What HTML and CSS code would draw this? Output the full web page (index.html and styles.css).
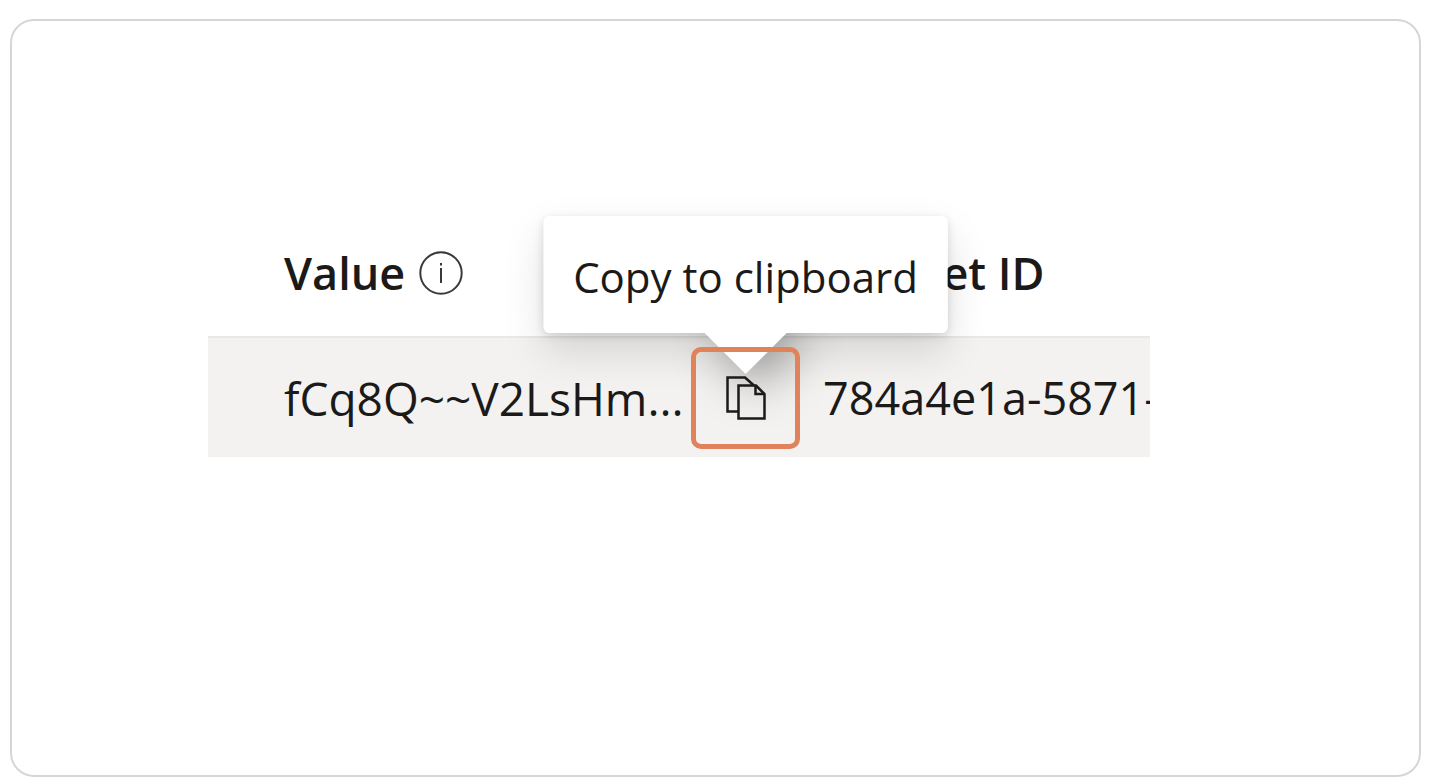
FILE: index.html
```html
<!DOCTYPE html>
<html lang="en">

    <head>
        <meta charset="UTF-8">
        <title>Client secrets</title>
        <link rel="stylesheet" href="styles.css">
    </head>

    <body>
        <main class="card">
            <table class="secrets">
                <colgroup>
                    <col class="col-value">
                    <col class="col-id">
                </colgroup>
                <thead>
                    <tr>
                        <th scope="col">
                            <div class="heading">
                                <span>Value</span>
                                <svg class="info-icon" viewBox="0 0 44 44" aria-hidden="true">
                                    <circle cx="22" cy="22" r="20.7" />
                                    <path d="M22 17v15M22 12v2.6" />
                                </svg>
                            </div>
                        </th>
                        <th scope="col">Secret ID</th>
                    </tr>
                </thead>
                <tbody>
                    <tr>
                        <td>
                            <div class="value">
                                <span class="value-text">fCq8Q~~V2LsHm...</span>
                                <div class="copy">
                                    <div class="tooltip" role="tooltip" id="copy-tip">
                                        <span class="tooltip-text">Copy to clipboard</span>
                                    </div>
                                    <button type="button" class="copy-button" aria-labelledby="copy-tip">
                                        <svg class="copy-icon" viewBox="0 0 40 44" aria-hidden="true">
                                            <path d="M12 35.5H1.5V1.5H19L28 9.5" />
                                            <path d="M12.5 9.5H30L38.5 18V42.5H12.5Z" />
                                            <path d="M29.5 9.5V18H38.5" />
                                        </svg>
                                    </button>
                                </div>
                            </div>
                        </td>
                        <td>784a4e1a-5871-</td>
                    </tr>
                </tbody>
            </table>
        </main>
    </body>

</html>
```

FILE: styles.css
```css
* {
    box-sizing: border-box;
}

body {
    margin: 0;
    padding: 19px 9px 7px 10px;
    min-height: 100vh;
    display: flex;
    background-color: #fff;
    color: #1b1a19;
    font-family: "Open Sans", "Noto Sans", sans-serif;
    font-size: 45px;
    line-height: 60px;
}

.card {
    flex: 1;
    padding: 189px 269px 40px 196px;
    border: 2px solid #d6d6d6;
    border-radius: 24px;
}

.secrets {
    width: 100%;
    table-layout: fixed;
    border-collapse: collapse;
}

.col-value {
    width: 614px;
}

th,
td {
    padding: 0 0 0 1px;
    text-align: left;
    white-space: nowrap;
    overflow: hidden;
}

th:first-child,
td:first-child {
    padding-left: 76px;
    overflow: visible;
}

th {
    height: 127px;
    padding-left: 28px;
    font-weight: 600;
}

td {
    height: 120px;
    background-color: #f3f2f1;
    border-top: 2px solid #e9e8e7;
}

.heading {
    display: flex;
    align-items: center;
    gap: 14px;
}

.info-icon {
    width: 44px;
    height: 44px;
    fill: none;
    stroke: #3b3a39;
    stroke-width: 2;
}

.value {
    display: flex;
    align-items: center;
    justify-content: space-between;
    padding-right: 22px;
}

.value-text {
    font-size: 46px;
}

.copy {
    position: relative;
}

.copy-button {
    position: relative;
    z-index: 2;
    display: flex;
    align-items: center;
    justify-content: center;
    width: 109px;
    height: 102px;
    padding: 0;
    border: 5px solid #e0825a;
    border-radius: 10px;
    background: none;
    cursor: pointer;
}

.copy-icon {
    width: 40px;
    height: 44px;
    fill: none;
    stroke: #1b1a19;
    stroke-width: 2.5;
}

.tooltip {
    position: absolute;
    z-index: 1;
    bottom: 116px;
    left: 50%;
    transform: translateX(-50%);
    border-radius: 6px;
    font-size: 42px;
    box-shadow: 0 18px 42px rgba(0, 0, 0, .13), 0 3px 10px rgba(0, 0, 0, .13);
}

/* beak, the text panel covers its upper half */
.tooltip::before {
    content: "";
    position: absolute;
    bottom: -29px;
    left: calc(50% - 29px);
    width: 58px;
    height: 58px;
    background-color: #fff;
    box-shadow: 0 16px 50px rgba(0, 0, 0, .42);
    transform: rotate(-45deg);
}

.tooltip-text {
    position: relative;
    display: block;
    padding: 31px 30px 26px;
    border-radius: 6px;
    background-color: #fff;
}
```
